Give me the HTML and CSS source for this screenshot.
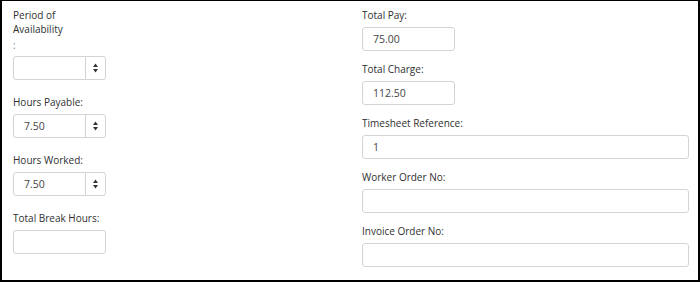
FILE: index.html
```html
<!DOCTYPE html>
<html lang="en">
<head>
  <meta charset="UTF-8"/>
  <title>Timesheet Details</title>
  <link rel="stylesheet" href="styles.css">
</head>
<body>
  <div class="panel">
    <div class="col col-left">
      <div class="field">
        <label class="lbl lbl-wrap">Period of Availability</label>
        <span class="colon">:</span>
        <div class="box spin">
          <span class="val"></span>
          <span class="arrows">
            <svg width="5" height="10" viewBox="0 0 5 10"><path d="M2.5 0.5L5 4H0Z M0 6H5L2.5 9.5Z" fill="#333"/></svg>
          </span>
        </div>
      </div>
      <div class="field">
        <label class="lbl">Hours Payable:</label>
        <div class="box spin">
          <span class="val">7.50</span>
          <span class="arrows">
            <svg width="5" height="10" viewBox="0 0 5 10"><path d="M2.5 0.5L5 4H0Z M0 6H5L2.5 9.5Z" fill="#333"/></svg>
          </span>
        </div>
      </div>
      <div class="field">
        <label class="lbl">Hours Worked:</label>
        <div class="box spin">
          <span class="val">7.50</span>
          <span class="arrows">
            <svg width="5" height="10" viewBox="0 0 5 10"><path d="M2.5 0.5L5 4H0Z M0 6H5L2.5 9.5Z" fill="#333"/></svg>
          </span>
        </div>
      </div>
      <div class="field">
        <label class="lbl">Total Break Hours:</label>
        <div class="box"><span class="val"></span></div>
      </div>
    </div>

    <div class="col col-right">
      <div class="field">
        <label class="lbl">Total Pay:</label>
        <div class="box"><span class="val">75.00</span></div>
      </div>
      <div class="field">
        <label class="lbl">Total Charge:</label>
        <div class="box"><span class="val">112.50</span></div>
      </div>
      <div class="field">
        <label class="lbl">Timesheet Reference:</label>
        <div class="box wide"><span class="val">1</span></div>
      </div>
      <div class="field">
        <label class="lbl">Worker Order No:</label>
        <div class="box wide"><span class="val"></span></div>
      </div>
      <div class="field">
        <label class="lbl">Invoice Order No:</label>
        <div class="box wide"><span class="val"></span></div>
      </div>
    </div>
  </div>
</body>
</html>
```

FILE: styles.css
```css
body {margin:0;background:#fff;font-family:'Open Sans',sans-serif;color:#333}
.panel {box-sizing:border-box;width:700px;height:282px;border:2px solid #000;border-top-width:1px;
        display:grid;grid-template-columns:349px 1fr;padding:7px 9px 0 11px}
.col {display:flex;flex-direction:column}
.col-left {gap:15px}
.col-right {gap:11px}
.field {display:flex;flex-direction:column}
.lbl {font-size:10px;line-height:14px;color:#2f2f2f}
.lbl-wrap {width:70px}
.colon {font-size:10px;line-height:12px;margin-top:3px;color:#6f8cae}
.box {box-sizing:border-box;width:93px;height:24px;margin-top:5px;
      border:1px solid #d4d4d4;border-radius:3px;background:#fff;
      display:flex;align-items:center}
.box.wide {width:auto}
.val {flex:1;padding-left:10px;font-size:10.5px;color:#444}
.arrows {width:19px;height:100%;border-left:1px solid #d4d4d4;
         display:flex;align-items:center;justify-content:center}
.arrows svg {display:block}
```
